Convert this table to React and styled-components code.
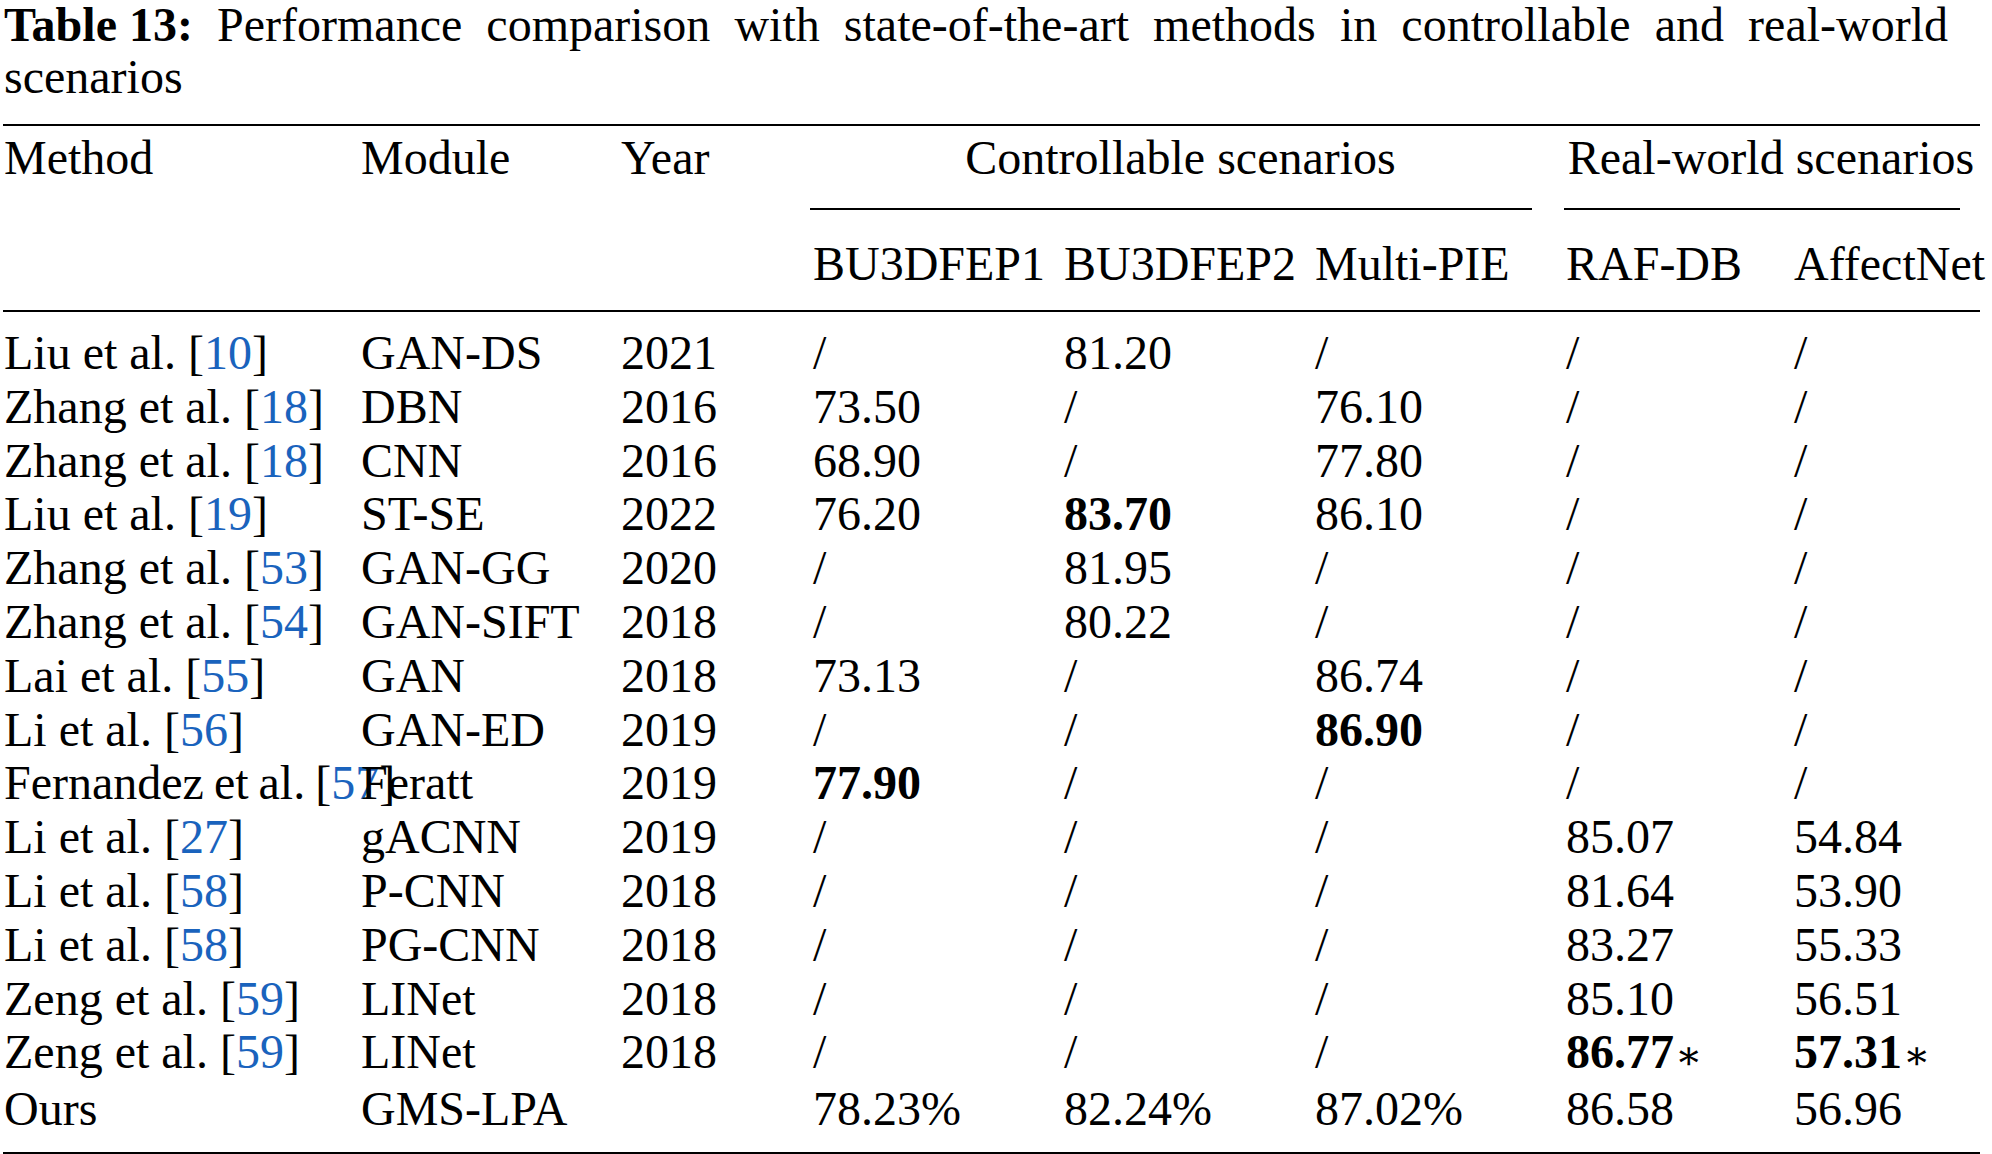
import React from 'react'
import styled, { createGlobalStyle } from 'styled-components'

const GlobalStyle = createGlobalStyle`
    html, body {
        margin: 0;
        padding: 0;
        background: #fff;
    }
`

const Page = styled.div`
    padding-left: 3px;
    font-family: "Liberation Serif", "Times New Roman", serif;
    font-size: 48px;
    color: #000;
`

const Caption = styled.div`
    width: 1944px;
    margin-top: -1px;
    padding-left: 1px;
    line-height: 52px;
`

const CaptionLine = styled.div`
    text-align: justify;
    text-align-last: ${p => (p.$fill ? 'justify' : 'left')};
    white-space: nowrap;
`

const CaptionLabel = styled.span`
    display: inline-block;
    font-weight: 700;
    white-space: nowrap;
`

const Table = styled.table`
    margin-top: 21px;
    width: 1977px;
    table-layout: fixed;
    border-collapse: separate;
    border-spacing: 0;
    border-top: 2px solid #000;
    border-bottom: 3px solid #000;
    line-height: 54px;
`

const HeadCell = styled.th`
    font-weight: 400;
    text-align: left;
    vertical-align: top;
    padding: ${p => (p.$second ? '27px 0 19px 1px' : '5px 0 0 1px')};
    border-bottom: ${p => (p.$rule ? '2px solid #000' : 'none')};
    white-space: nowrap;
`

const GroupText = styled.div`
    text-align: center;
    padding-right: ${p => p.$trim}px;
`

const GroupRule = styled.div`
    margin: 23px ${p => p.$right}px 0 ${p => p.$left}px;
    height: 2px;
    background: #000;
`

const Cell = styled.td`
    padding: 0 0 0 1px;
    vertical-align: top;
    line-height: 53.8px;
    white-space: nowrap;
    overflow: visible;
    font-weight: ${p => (p.$bold ? 700 : 400)};
    word-spacing: ${p => (p.$tight ? '-2px' : 'normal')};
    tr:first-child > & {
        padding-top: 14px;
    }
    tr:last-child > & {
        padding-bottom: 16px;
    }
`

const Cite = styled.span`
    color: #1a63bd;
`

const Star = styled.span`
    font-weight: 400;
    font-family: "DejaVu Serif", "Liberation Serif", serif;
    font-size: 40px;
    position: relative;
    top: 1px;
    margin-left: 1px;
`

const widths = [357, 260, 192, 251, 251, 251, 228, 187]

const rows = [
    ['Liu et al.', '10', 'GAN-DS', '2021', '/', '81.20', '/', '/', '/'],
    ['Zhang et al.', '18', 'DBN', '2016', '73.50', '/', '76.10', '/', '/'],
    ['Zhang et al.', '18', 'CNN', '2016', '68.90', '/', '77.80', '/', '/'],
    ['Liu et al.', '19', 'ST-SE', '2022', '76.20', '!83.70', '86.10', '/', '/'],
    ['Zhang et al.', '53', 'GAN-GG', '2020', '/', '81.95', '/', '/', '/'],
    ['Zhang et al.', '54', 'GAN-SIFT', '2018', '/', '80.22', '/', '/', '/'],
    ['Lai et al.', '55', 'GAN', '2018', '73.13', '/', '86.74', '/', '/'],
    ['Li et al.', '56', 'GAN-ED', '2019', '/', '/', '!86.90', '/', '/'],
    ['Fernandez et al.', '57', 'Feratt', '2019', '!77.90', '/', '/', '/', '/'],
    ['Li et al.', '27', 'gACNN', '2019', '/', '/', '/', '85.07', '54.84'],
    ['Li et al.', '58', 'P-CNN', '2018', '/', '/', '/', '81.64', '53.90'],
    ['Li et al.', '58', 'PG-CNN', '2018', '/', '/', '/', '83.27', '55.33'],
    ['Zeng et al.', '59', 'LINet', '2018', '/', '/', '/', '85.10', '56.51'],
    ['Zeng et al.', '59', 'LINet', '2018', '/', '/', '/', '!86.77*', '!57.31*'],
    ['Ours', null, 'GMS-LPA', '', '78.23%', '82.24%', '87.02%', '86.58', '56.96'],
]

function Value({ raw }) {
    const bold = raw.startsWith('!')
    let text = bold ? raw.slice(1) : raw
    const star = text.endsWith('*')
    if (star) text = text.slice(0, -1)
    return (
        <Cell $bold={bold}>
            {text}
            {star && <Star>∗</Star>}
        </Cell>
    )
}

export default function App() {
    return (
        <Page>
            <GlobalStyle />
            <Caption>
                <CaptionLine $fill>
                    <CaptionLabel>Table 13:</CaptionLabel> Performance comparison with state-of-the-art methods in controllable and real-world
                </CaptionLine>
                <CaptionLine>scenarios</CaptionLine>
            </Caption>
            <Table>
                <colgroup>
                    {widths.map((w, i) => <col key={i} style={{ width: w }} />)}
                </colgroup>
                <thead>
                    <tr>
                        <HeadCell rowSpan={2} $rule>Method</HeadCell>
                        <HeadCell rowSpan={2} $rule>Module</HeadCell>
                        <HeadCell rowSpan={2} $rule>Year</HeadCell>
                        <HeadCell colSpan={3}>
                            <GroupText $trim={17}>Controllable scenarios</GroupText>
                            <GroupRule $left={-3} $right={33} />
                        </HeadCell>
                        <HeadCell colSpan={2}>
                            <GroupText $trim={4}>Real-world scenarios</GroupText>
                            <GroupRule $left={-2} $right={20} />
                        </HeadCell>
                    </tr>
                    <tr>
                        <HeadCell $second $rule>BU3DFEP1</HeadCell>
                        <HeadCell $second $rule>BU3DFEP2</HeadCell>
                        <HeadCell $second $rule>Multi-PIE</HeadCell>
                        <HeadCell $second $rule>RAF-DB</HeadCell>
                        <HeadCell $second $rule>AffectNet</HeadCell>
                    </tr>
                </thead>
                <tbody>
                    {rows.map((r, i) => (
                        <tr key={i}>
                            <Cell $tight={r[0].startsWith('Fern')}>
                                {r[0]}
                                {r[1] && <> [<Cite>{r[1]}</Cite>]</>}
                            </Cell>
                            <Cell>{r[2]}</Cell>
                            <Cell>{r[3]}</Cell>
                            {r.slice(4).map((v, j) => <Value key={j} raw={v} />)}
                        </tr>
                    ))}
                </tbody>
            </Table>
        </Page>
    )
}
